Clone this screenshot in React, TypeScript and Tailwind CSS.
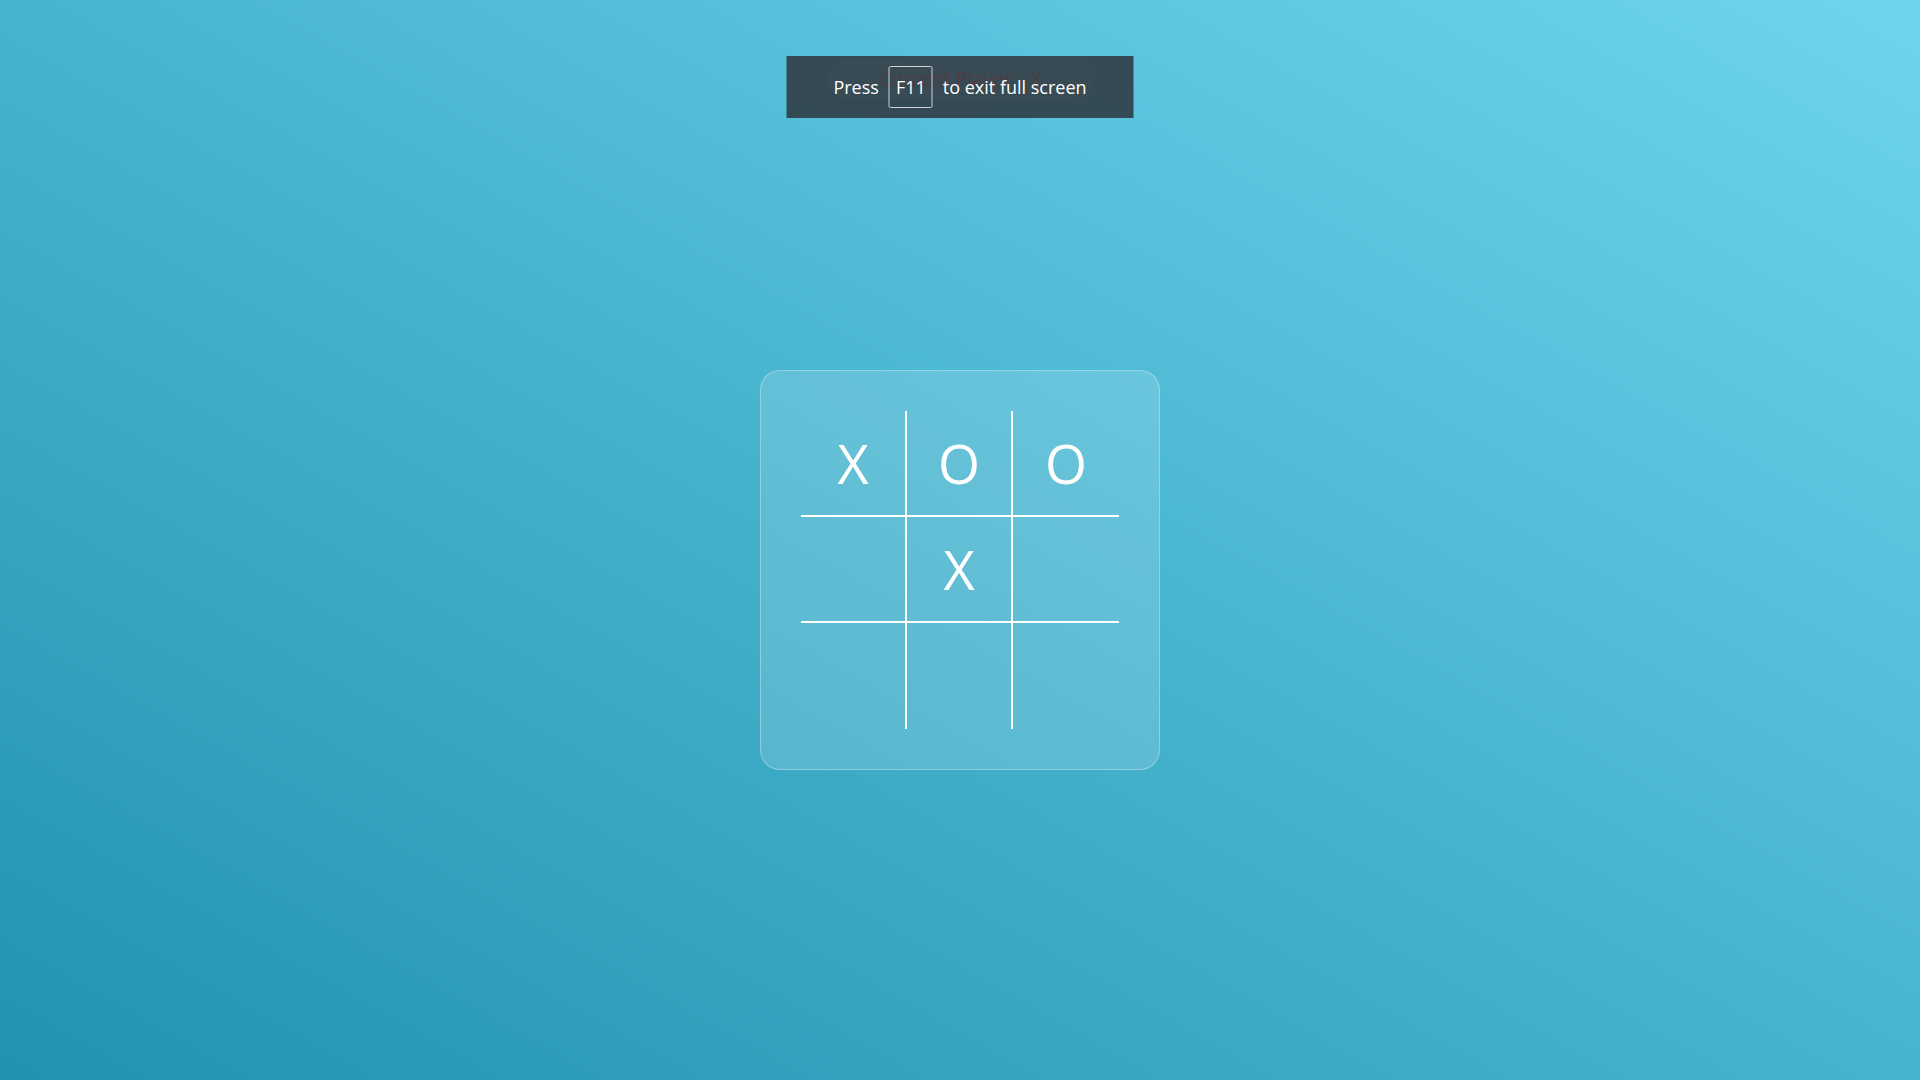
const board = ["X", "O", "O", "", "X", "", "", "", ""];

export default function App() {
  return (
    <div className="relative min-h-screen w-full bg-[linear-gradient(to_top_right,#2193b0,#6dd5ed)] font-['Open_Sans',sans-serif] text-white">
      <div className="flex flex-col items-center">
        {/* Status pill */}
        <div className="mt-[60px] flex h-[38px] w-[264px] items-center justify-center rounded-full border border-white/30 bg-white/15 text-[20px] text-[#ff6b6b]">
          Current Player - X
        </div>

        {/* Board card */}
        <div className="mt-[272px] rounded-[20px] border border-white/30 bg-white/15 p-10">
          <div className="grid grid-cols-3">
            {board.map((cell, i) => {
              const col = i % 3;
              const row = Math.floor(i / 3);
              return (
                <div
                  key={i}
                  className={`flex h-[106px] w-[106px] items-center justify-center border-white text-[54px] leading-none ${
                    col < 2 ? "border-r-2" : ""
                  } ${row < 2 ? "border-b-2" : ""}`}
                >
                  {cell}
                </div>
              );
            })}
          </div>
        </div>
      </div>

      {/* Fullscreen notice */}
      <div className="absolute left-1/2 top-[56px] flex h-[62px] w-[347px] -translate-x-1/2 items-center justify-center gap-[10px] bg-[rgba(47,53,62,0.86)] text-[18px] text-white">
        <span>Press</span>
        <span className="flex h-[42px] w-[44px] items-center justify-center rounded-[2px] border border-[#d0d0d0]">
          F11
        </span>
        <span>to exit full screen</span>
      </div>
    </div>
  );
}
